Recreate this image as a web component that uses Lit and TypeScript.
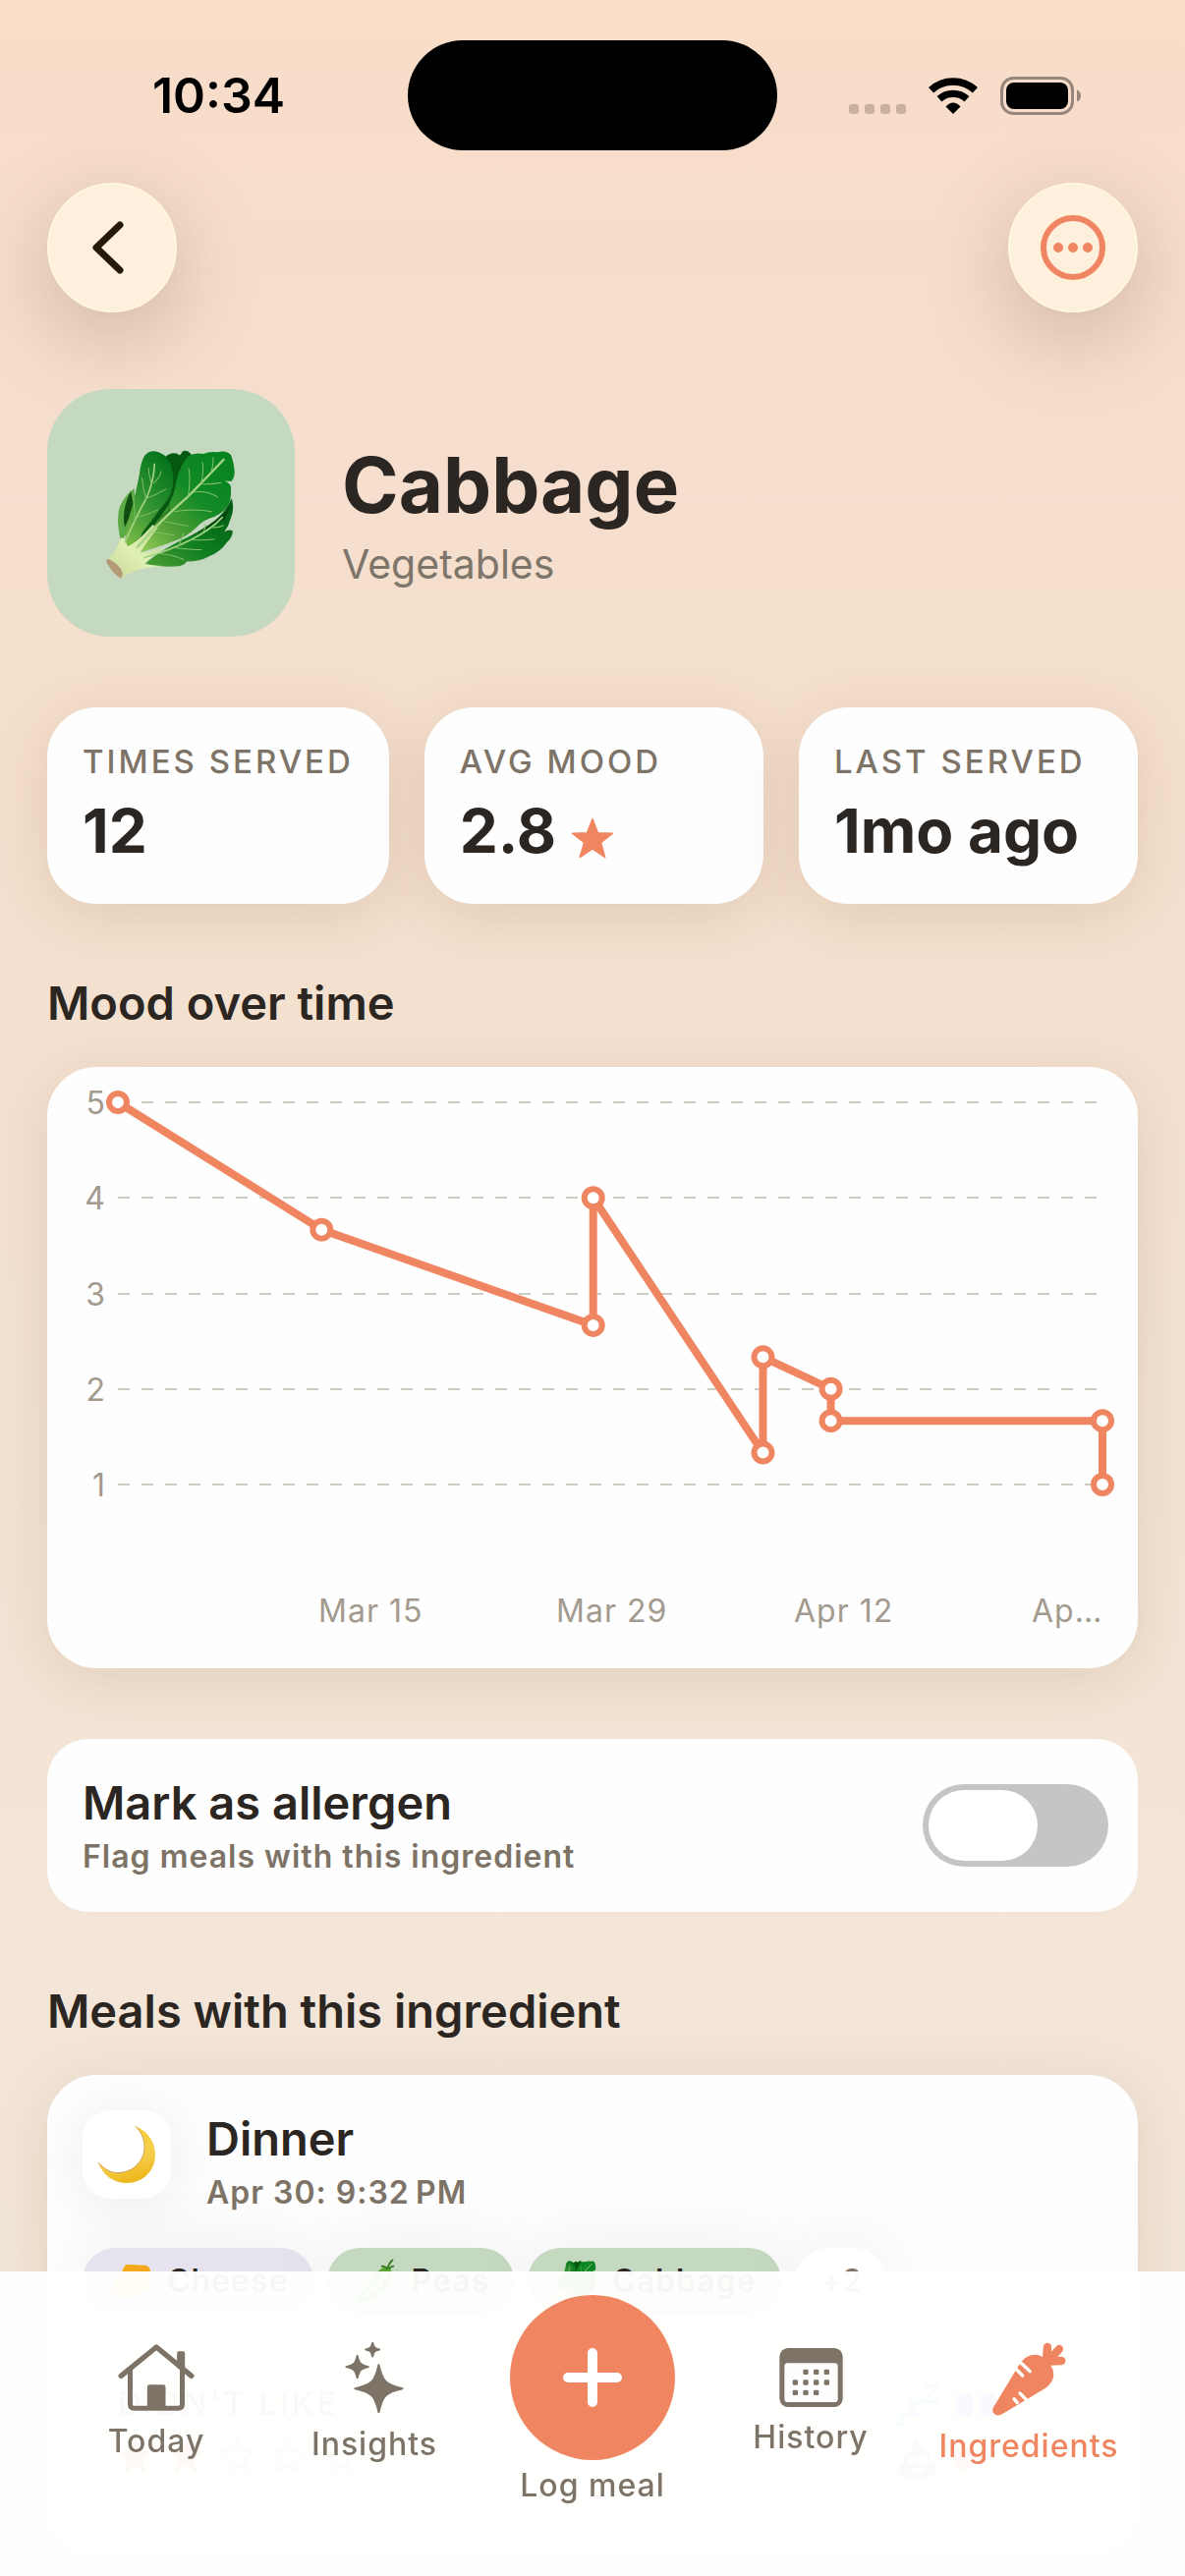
import { LitElement, html, svg, css } from "lit";
import { customElement, state } from "lit/decorators.js";

const STAR = "M50 4 L63 38 L98 39 L70 61 L80 96 L50 76 L20 96 L30 61 L2 39 L37 38 Z";

const sparkle = (cx: number, cy: number, a: number) => {
  const t = a * 0.16;
  const k = a * 0.28;
  return svg`<path d="M${cx} ${cy - a} C${cx + t} ${cy - a * 0.3} ${cx + k} ${cy - t} ${cx + a} ${cy} C${cx + k} ${cy + t} ${cx + t} ${cy + a * 0.3} ${cx} ${cy + a} C${cx - t} ${cy + a * 0.3} ${cx - k} ${cy + t} ${cx - a} ${cy} C${cx - k} ${cy - t} ${cx - t} ${cy - a * 0.3} ${cx} ${cy - a} Z" stroke="currentColor" stroke-width="6" stroke-linejoin="round"/>`;
};

const cabbage = (size: number) => html`
  <svg width=${size} height=${size} viewBox="52 76 400 400" aria-hidden="true">
    <defs>
      <linearGradient id="leaf" x1="1" y1="0" x2="0.1" y2="1">
        <stop offset="0" stop-color="#04811d" />
        <stop offset="0.45" stop-color="#138a26" />
        <stop offset="0.75" stop-color="#4f9f35" />
        <stop offset="1" stop-color="#8fc655" />
      </linearGradient>
      <linearGradient id="low" x1="1" y1="0.1" x2="0" y2="1">
        <stop offset="0" stop-color="#035c14" />
        <stop offset="0.5" stop-color="#0d7d20" />
        <stop offset="1" stop-color="#4f9f35" />
      </linearGradient>
      <linearGradient id="front" x1="0.7" y1="0" x2="0.2" y2="1">
        <stop offset="0" stop-color="#04741b" />
        <stop offset="0.5" stop-color="#2f9130" />
        <stop offset="1" stop-color="#78b845" />
      </linearGradient>
      <linearGradient id="stalk" x1="1" y1="0" x2="0" y2="1">
        <stop offset="0" stop-color="#b5d98a" />
        <stop offset="0.5" stop-color="#e0f0b4" />
        <stop offset="1" stop-color="#c9d698" />
      </linearGradient>
    </defs>
    <path d="M232 108 Q250 90 272 96 Q280 108 286 90 Q300 82 312 96 L330 130 L230 330 L150 380 Z" fill="#05580f" />
    <path d="M100 362 Q84 300 96 258 Q112 222 140 202 L150 300 Z" fill="#5cab45" />
    <path d="M130 210 Q100 270 112 320 Q124 290 140 262 Z" fill="#0f4d10" />
    <path d="M172 432 Q230 380 330 338 Q405 300 436 232 Q446 262 434 292 Q428 316 414 334 Q430 324 440 332 Q438 352 420 368 Q404 394 368 408 Q340 424 300 424 Q290 440 262 439 Q210 440 172 432 Z" fill="url(#low)" />
    <path d="M300 352 Q370 320 416 296 L436 250 Q400 300 300 352 Z" fill="#04470d" />
    <path d="M156 398 Q172 350 210 300 Q262 240 268 180 Q280 130 304 104 Q322 92 350 97 Q372 88 392 92 Q420 84 434 100 Q442 118 445 148 Q446 168 436 180 L414 180 Q430 184 434 196 Q436 222 430 244 Q416 274 384 288 Q352 296 332 318 Q300 352 250 366 Q200 384 156 398 Z" fill="url(#leaf)" />
    <path d="M112 366 Q120 300 136 250 Q148 200 156 160 Q160 120 172 102 Q190 82 214 92 Q244 102 254 140 Q266 190 246 230 Q200 290 168 332 Q150 368 124 382 Z" fill="url(#front)" />
    <path d="M120 390 Q180 330 246 268 Q240 236 262 196" fill="none" stroke="#0b5a12" stroke-width="5" opacity="0.5" />
    <path d="M55 424 Q84 396 100 352 Q112 350 120 378 Q150 366 196 312 L212 322 Q176 366 158 398 Q180 396 232 382 Q190 410 172 430 Q190 436 232 438 Q150 440 100 475 Z" fill="url(#stalk)" />
    <path d="M55 424 Q56 414 66 418 Q96 434 104 456 Q106 470 100 475 Q74 462 55 424 Z" fill="#b29a76" />
    <g fill="none" stroke-linecap="round" stroke="#a5d384">
      <path d="M150 380 Q230 290 300 230 Q350 180 412 114" stroke-width="7" />
      <path d="M112 365 Q150 280 178 230 Q200 180 202 128" stroke-width="5" />
      <path d="M170 412 Q250 390 312 358 Q370 330 408 290" stroke-width="5" />
    </g>
    <g fill="none" stroke-linecap="round" stroke="#7fbf68" stroke-width="3">
      <path d="M304 226 Q312 180 306 142 M344 186 Q352 156 348 122 M372 158 Q382 132 380 108 M344 188 Q376 190 404 184 M318 214 Q356 206 394 228 M262 272 Q320 262 376 272 M232 302 Q270 310 304 316 M204 336 Q234 340 262 344" />
      <path d="M176 232 Q166 200 164 170 M194 190 Q184 160 184 140 M200 186 Q220 166 222 150 M178 232 Q206 222 236 204 M152 288 Q184 282 212 266 M142 306 Q142 260 138 232" />
      <path d="M264 382 Q310 388 344 388 M312 358 Q352 360 384 356 M276 376 Q286 350 290 340 M346 340 Q356 326 358 312 M220 400 Q260 404 290 418 M374 320 Q396 322 412 314" />
    </g>
  </svg>
`;

const moon = html`
  <svg width="60" height="60" viewBox="0 0 60 60" aria-hidden="true">
    <defs>
      <linearGradient id="gold" x1="0.4" y1="0" x2="0.7" y2="1">
        <stop offset="0" stop-color="#f7d23c" />
        <stop offset="0.6" stop-color="#f5cc4a" />
        <stop offset="1" stop-color="#ecb412" />
      </linearGradient>
    </defs>
    <path d="M38.500 1 C52 6 59 18 59 30 C59 47 46 59 30 59 C17 59 5 51 1 38 C8 46 15 49 22 48.500 C37 48 48 36 48 22 C48 13 44 6 38.500 1 Z" fill="url(#gold)" />
    <path d="M1 38 C8 46 15 49 22 48.500 C37 48 48 36 48 22 C48 13 44 6 38.500 1" fill="none" stroke="#b9772a" stroke-width="1" opacity="0.6" />
  </svg>
`;

const cheese = html`
  <svg width="43" height="36" viewBox="0 0 43 36" aria-hidden="true">
    <path d="M17 1 L38 2 Q42 4 42 9 L42 26 L22 34 Q8 36 1 29 Z" fill="#fbc531" />
    <path d="M17 1 L38 2 Q42 4 42 9 Q28 9 13 10 Z" fill="#f6a81c" />
    <ellipse cx="16" cy="24" rx="4" ry="3" fill="#e79a10" />
    <ellipse cx="32" cy="17" rx="4" ry="3" fill="#e79a10" />
  </svg>
`;

const peas = html`
  <svg width="43" height="46" viewBox="0 0 43 46" aria-hidden="true">
    <path d="M37 9 Q43 22 30 33 Q18 44 2 45 Q1 40 8 33 Q18 24 24 14 Q30 7 37 9 Z" fill="#5ba534" />
    <path d="M35 13 Q37 22 27 30 Q17 39 8 41 Q12 34 20 27 Q27 19 35 13 Z" fill="#2e7a1c" />
    <g fill="#a4d75b"><circle cx="32" cy="18" r="4" /><circle cx="27" cy="25" r="4" /><circle cx="21" cy="31" r="4" /><circle cx="14" cy="36" r="3" /></g>
    <path d="M34 11 Q36 4 40 1 M34 10 Q31 7 28 8 M36 10 Q39 7 41 8" stroke="#3c7c26" stroke-width="2" fill="none" />
  </svg>
`;

const DATA: Array<[number, number]> = [
  [0, 5], [12, 3.667], [28, 2.667], [28, 4], [38, 1.333],
  [38, 2.333], [42, 2], [42, 1.667], [58, 1.667], [58, 1],
];
const TICKS: Array<[number, string]> = [[12, "Mar 15"], [26, "Mar 29"], [40, "Apr 12"], [54, "Ap…"]];

@customElement("mood-chart")
export class MoodChart extends LitElement {
  static styles = css`
    :host { display: block; }
    .plot { display: block; width: 100%; height: auto; overflow: visible; }
    .grid { stroke: #cfccc4; stroke-width: 2; stroke-dasharray: 12 12; }
    .axis { fill: #a39a8f; font: 400 32px Inter, sans-serif; letter-spacing: 1px; }
    .line { fill: none; stroke: #f08661; stroke-width: 8; stroke-linejoin: round; }
    .dot { fill: #fff; stroke: #f08661; stroke-width: 6; }
  `;

  private px(day: number) {
    return 72 + (day * 1002) / 58;
  }

  private py(mood: number) {
    return 36 + (5 - mood) * 97.25;
  }

  render() {
    return html`
      <svg class="plot" viewBox="0 0 1110 612" role="img" aria-label="Mood over time">
        ${[5, 4, 3, 2, 1].map(
          (v) => svg`
            <line class="grid" x1="72" x2="1068" y1=${Math.round(this.py(v))} y2=${Math.round(this.py(v))}></line>
            <text class="axis" x="60" y=${Math.round(this.py(v)) + 12} text-anchor="end">${v}</text>`
        )}
        ${TICKS.map(([d, t]) => svg`<text class="axis" x=${Math.round(this.px(d)) - 3} y="565">${t}</text>`)}
        <polyline class="line" points=${DATA.map(([d, m]) => `${this.px(d)},${this.py(m)}`).join(" ")}></polyline>
        ${DATA.map(([d, m]) => svg`<circle class="dot" r="9" cx=${this.px(d)} cy=${this.py(m)}></circle>`)}
      </svg>
    `;
  }
}

@customElement("app-root")
export class AppRoot extends LitElement {
  @state() private allergen = false;

  static styles = css`
    :host {
      display: block;
      min-height: 100vh;
      box-sizing: border-box;
      font-family: Inter, "Liberation Sans", sans-serif;
      color: #2c2622;
      background: linear-gradient(180deg, #f8ddc8 0%, #f6decd 14%, #f4dfcd 30%, #f3e2d2 50%, #f3e5d7 75%, #f2e7d8 100%);
    }
    * { box-sizing: border-box; }
    h1, h2, h3, p, dl, dd, dt { margin: 0; }
    svg { display: block; flex: none; }
    a { color: inherit; text-decoration: none; }
    button { font: inherit; border: 0; padding: 0; cursor: pointer; }

    .status { display: grid; grid-template-columns: 1fr 376px 1fr; align-items: center; padding-top: 41px; color: #000; }
    .clock { font-size: 50px; line-height: 60px; font-weight: 600; padding-left: 30px; text-align: center; }
    .island { height: 112px; border-radius: 56px; background: #000; }
    .signals { display: flex; align-items: center; justify-content: flex-end; gap: 23px; padding-right: 106px; }

    .topbar { display: flex; justify-content: space-between; padding: 33px 48px 0; }
    .round {
      display: grid; place-items: center; width: 132px; height: 132px; border-radius: 50%;
      background: #fff0de; border: 2px solid #fff6dc; color: #241a08;
      box-shadow: 0 24px 84px rgba(90, 70, 40, 0.26);
    }
    .round.accent { color: #f08661; }

    main { display: flex; flex-direction: column; gap: 72px; padding: 78px 48px 24px; }
    .hero { display: flex; align-items: center; gap: 48px; }
    .tile { display: grid; place-items: center; width: 252px; height: 252px; border-radius: 64px; background: #c5d9c1; }
    .intro { padding-top: 4px; }
    .name { font-size: 78px; line-height: 94px; font-weight: 700; }
    .group { font-size: 41px; line-height: 54px; margin-top: 6px; color: #7d756a; }

    .card { background: #fefefe; border-radius: 50px; box-shadow: 0 12px 60px rgba(110, 70, 30, 0.13); }
    .stats { display: grid; grid-template-columns: repeat(3, 1fr); gap: 36px; }
    .stat { padding: 36px; white-space: nowrap; }
    .caps { font-size: 33px; line-height: 39px; font-weight: 500; letter-spacing: 3px; color: #7d7366; }
    .value { display: flex; align-items: center; gap: 16px; margin-top: 12px; font-size: 62px; line-height: 77px; font-weight: 700; }
    .value svg { color: #f08661; margin-top: 14px; }

    .section { display: flex; flex-direction: column; gap: 36px; }
    .title { font-size: 47px; line-height: 58px; font-weight: 600; }
    .note { font-size: 32px; line-height: 40px; font-weight: 600; letter-spacing: 1px; margin-top: 6px; color: #7d7366; }

    .allergen { display: flex; align-items: center; justify-content: space-between; padding: 36px 30px 36px 36px; border-radius: 42px; box-shadow: none; }
    .allergen label { flex: 1; }
    .switch {
      appearance: none; margin: 0; width: 189px; height: 84px; border-radius: 42px; padding: 6px; background: #c5c5c7; cursor: pointer;
      display: flex; align-items: center;
    }
    .switch::before { content: ""; width: 111px; height: 72px; border-radius: 36px; background: #fff; }
    .switch:checked { background: #f08661; justify-content: flex-end; }

    .meal { display: flex; flex-direction: column; gap: 36px; padding: 36px 36px 42px; }
    .meal-head { display: flex; gap: 36px; }
    .mini { display: grid; place-items: center; width: 90px; height: 90px; border-radius: 28px; background: #fff; box-shadow: 0 6px 60px rgba(0, 0, 0, 0.08); }
    .chips { display: flex; gap: 14px; }
    .chip { display: flex; align-items: center; gap: 16px; height: 67px; padding: 0 25px 0 27px; border-radius: 34px; background: #c5d9c1; font-size: 32px; font-weight: 600; letter-spacing: 1px; box-shadow: 0 0 72px rgba(0, 0, 0, 0.07); }
    .chip.dairy { background: #e6e2ee; }
    .chip.more { background: #fff; color: #7d7366; }
    .rating { display: flex; justify-content: space-between; padding: 36px; }
    .stars { display: flex; gap: 17px; margin-top: 16px; color: #e0533a; }
    .scales { display: flex; flex-direction: column; gap: 12px; }
    .scale { display: flex; align-items: center; gap: 6px; height: 42px; }
    .scale svg { margin-right: 10px; }
    .pip { width: 18px; height: 24px; border-radius: 6px; background: #f4f4f4; }
    .pip.sleep { background: #6f8bff; }
    .pip.gut { background: #f0806a; }

    .tabs {
      position: fixed; left: 0; right: 0; bottom: 0; padding: 24px 48px 68px;
      display: grid; grid-template-columns: repeat(5, minmax(0, 1fr)); align-items: center; justify-items: center;
      background: rgba(255, 255, 254, 0.96); color: #7d7366;
    }
    .tab { display: flex; flex-direction: column; align-items: center; gap: 11px; font-size: 32px; line-height: 40px; font-weight: 500; letter-spacing: 1px; white-space: nowrap; }
    .tab.on { color: #f08661; }
    .tab.log { gap: 6px; padding-bottom: 4px; background: none; color: inherit; }
    .fab { display: grid; place-items: center; width: 168px; height: 168px; border-radius: 50%; background: #f08661; color: #fff; }
  `;

  private star(size: number, filled = true) {
    return html`<svg width=${size} height=${size} viewBox="0 0 100 100" aria-hidden="true">
      <path d=${STAR} fill=${filled ? "currentColor" : "none"} stroke=${filled ? "currentColor" : "#8a8a8a"} stroke-width="4" stroke-linejoin="round" />
    </svg>`;
  }

  private pips(on: number, kind: string) {
    return [0, 1, 2, 3, 4].map((i) => html`<span class="pip ${i < on ? kind : ""}"></span>`);
  }

  render() {
    return html`
      <div class="status">
        <span class="clock">10:34</span>
        <span class="island"></span>
        <span class="signals">
          <svg width="58" height="37" viewBox="0 0 58 37" fill="#c8b1a0" aria-hidden="true">
            ${[0, 16, 32, 48].map((x) => svg`<rect x=${x} y="27" width="10" height="10" rx="3"></rect>`)}
          </svg>
          <svg width="50" height="37" viewBox="0 0 50 37" fill="none" stroke="#000" stroke-width="7.500" aria-hidden="true">
            <path d="M2.600 12.800 A33 33 0 0 1 47.400 12.800" />
            <path d="M11 21.800 A20.700 20.700 0 0 1 39 21.800" stroke-width="7.300" />
            <path d="M25 37 L17.500 29.500 Q25 21.500 32.500 29.500 Z" fill="#000" stroke="none" />
          </svg>
          <svg width="82" height="39" viewBox="0 0 82 39" aria-hidden="true">
            <rect x="1.500" y="1.500" width="72" height="36" rx="12" fill="none" stroke="#97877a" stroke-width="3" />
            <rect x="6" y="6" width="63" height="27" rx="8" fill="#000" />
            <path d="M78 13.500 Q82 15 82 19.500 Q82 24 78 25.500 Z" fill="#97877a" />
          </svg>
        </span>
      </div>

      <header class="topbar">
        <button class="round" aria-label="Back">
          <svg width="44" height="56" viewBox="0 0 44 56" fill="none" stroke="currentColor" stroke-width="7" stroke-linecap="round" stroke-linejoin="round">
            <path d="M30 5 L6 28 L30 51" />
          </svg>
        </button>
        <button class="round accent" aria-label="More">
          <svg width="66" height="66" viewBox="0 0 66 66" fill="currentColor">
            <circle cx="33" cy="33" r="30" fill="none" stroke="currentColor" stroke-width="6" />
            <circle cx="18" cy="33" r="5" /><circle cx="33" cy="33" r="5" /><circle cx="48" cy="33" r="5" />
          </svg>
        </button>
      </header>

      <main>
        <section class="hero">
          <div class="tile">${cabbage(134)}</div>
          <div class="intro">
            <h1 class="name">Cabbage</h1>
            <p class="group">Vegetables</p>
          </div>
        </section>

        <dl class="stats">
          <div class="card stat"><dt class="caps">TIMES SERVED</dt><dd class="value">12</dd></div>
          <div class="card stat"><dt class="caps">AVG MOOD</dt><dd class="value">2.8 ${this.star(42)}</dd></div>
          <div class="card stat"><dt class="caps">LAST SERVED</dt><dd class="value">1mo ago</dd></div>
        </dl>

        <section class="section">
          <h2 class="title">Mood over time</h2>
          <mood-chart class="card"></mood-chart>
        </section>

        <section class="card allergen">
          <label for="allergen">
            <div class="title">Mark as allergen</div>
            <div class="note">Flag meals with this ingredient</div>
          </label>
          <input id="allergen" class="switch" type="checkbox" role="switch" .checked=${this.allergen}
            @change=${(e: Event) => (this.allergen = (e.target as HTMLInputElement).checked)} />
        </section>

        <section class="section">
          <h2 class="title">Meals with this ingredient</h2>
          <article class="card meal">
            <div class="meal-head">
              <span class="mini">${moon}</span>
              <div>
                <h3 class="title">Dinner</h3>
                <p class="note">Apr 30: 9:32\u202FPM</p>
              </div>
            </div>
            <div class="chips">
              <span class="chip dairy">${cheese}Cheese</span>
              <span class="chip">${peas}Peas</span>
              <span class="chip">${cabbage(43)}Cabbage</span>
              <span class="chip more">+2</span>
            </div>
            <div class="rating">
              <div>
                <div class="caps">DIDN'T LIKE</div>
                <div class="stars">${[0, 1, 2, 3, 4].map((i) => this.star(35, i < 2))}</div>
              </div>
              <div class="scales">
                <div class="scale">
                  <svg width="44" height="44" viewBox="0 0 44 44" fill="none" stroke="#6fa8f0" stroke-width="4" aria-hidden="true">
                    <path d="M28 3 H42 L28 19 H43 M13 19 H24 L13 31 H25 M1 33 H9 L1 42 H10" />
                  </svg>
                  ${this.pips(2, "sleep")}
                </div>
                <div class="scale">
                  <svg width="44" height="40" viewBox="0 0 44 40" aria-hidden="true">
                    <path d="M17 1 Q28 4 28 12 Q36 14 35 22 Q42 25 41 31 Q41 39 32 39 H10 Q2 39 2 31 Q3 26 8 24 Q7 15 14 13 Q19 9 17 1 Z" fill="#a08878" />
                    <circle cx="16" cy="22" r="5" fill="#fff" /><circle cx="27" cy="22" r="5" fill="#fff" />
                    <path d="M13 30 H31 Q22 39 13 30 Z" fill="#fff" />
                  </svg>
                  ${this.pips(1, "gut")}
                </div>
              </div>
            </div>
          </article>
        </section>
      </main>

      <nav class="tabs">
        <a class="tab" href="#today">
          <svg width="78" height="68" viewBox="92 138 233 204" fill="none" stroke="currentColor" stroke-linecap="round" stroke-linejoin="round" aria-hidden="true">
            <path d="M101 235 L209 147 L316 235" stroke-width="16" />
            <path d="M129 215 V322 Q129 334 141 334 H276 Q288 334 288 322 V215" stroke-width="15" />
            <rect x="181" y="262" width="56" height="76" rx="7" fill="currentColor" stroke="none" />
            <rect x="272" y="160" width="24" height="54" rx="6" fill="currentColor" stroke="none" />
          </svg>
          Today
        </a>
        <a class="tab" href="#insights">
          <svg width="62" height="74" viewBox="780 128 185 224" fill="currentColor" aria-hidden="true">
            ${sparkle(886, 274, 73)} ${sparkle(820, 207, 34)} ${sparkle(867, 154, 21)}
          </svg>
          Insights
        </a>
        <button class="tab log">
          <span class="fab">
            <svg width="60" height="60" viewBox="0 0 60 60" fill="none" stroke="currentColor" stroke-width="10" stroke-linecap="round" aria-hidden="true">
              <path d="M30 5 V55 M5 30 H55" />
            </svg>
          </span>
          Log meal
        </button>
        <a class="tab" href="#history">
          <svg width="65" height="60" viewBox="68 45 195 180" fill="currentColor" aria-hidden="true">
            <rect x="69" y="45" width="193" height="180" rx="26" />
            <rect x="84" y="91" width="163" height="119" rx="10" fill="#fefefe" />
            ${[[149, 118], [181, 118], [213, 118], [117, 150], [149, 150], [181, 150], [213, 150], [117, 181], [149, 181], [181, 181]].map(
              ([x, y]) => svg`<rect x=${x - 8} y=${y - 8} width="16" height="16" rx="4"></rect>`
            )}
          </svg>
          History
        </a>
        <a class="tab on" href="#ingredients" aria-current="page">
          <svg width="78" height="78" viewBox="713 16 234 234" fill="currentColor" stroke-linecap="round" aria-hidden="true">
            <path d="M723 222 L797 100 Q818 62 850 63 Q866 63 876 74 L897 96 Q908 110 905 132 Q900 152 880 166 L746 246 Q732 253 723 242 Q716 233 723 222 Z" />
            <path d="M884 80 L887 40 M888 84 L923 46 M892 84 L930 82" fill="none" stroke="currentColor" stroke-width="25" />
            <path d="M790 106 L811 127 M806 88 L834 114 M785 198 L795 210 M803 181 L828 206" fill="none" stroke="#fefefe" stroke-width="10" />
          </svg>
          Ingredients
        </a>
      </nav>
    `;
  }
}
